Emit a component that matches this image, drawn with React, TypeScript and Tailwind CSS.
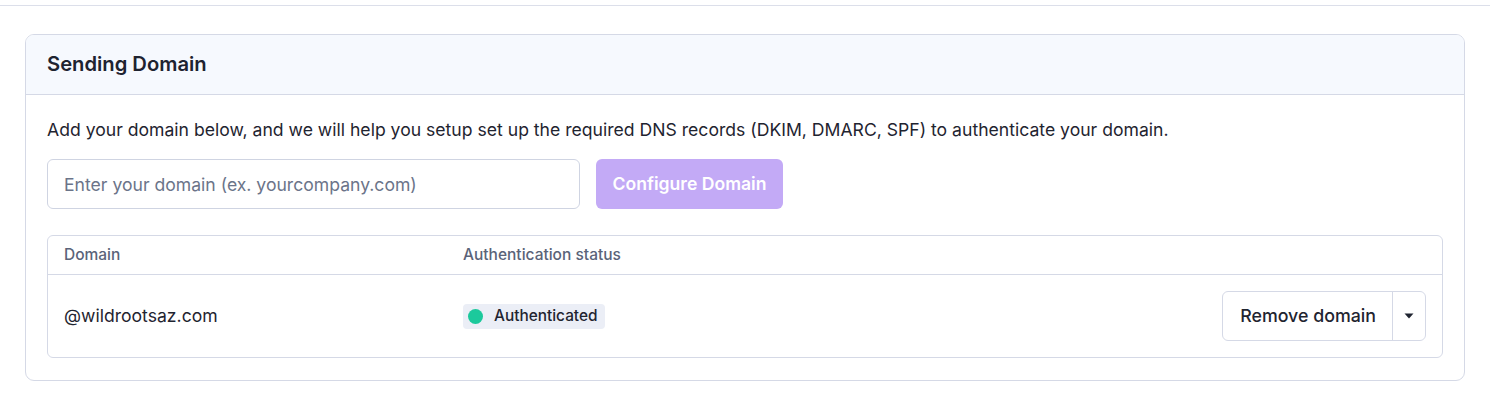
import { useState } from 'react'

export default function App() {
  const [domain, setDomain] = useState('')

  return (
    <div className="min-h-[406px] bg-white font-['Inter','Noto_Sans',sans-serif] text-[#1f2430]">
      {/* top divider */}
      <div className="h-[6px] border-b border-[#dcdfea]" />

      <div className="px-[25px] pt-[28px]">
        <section className="overflow-hidden rounded-[9px] border border-[#d5d9e6]">
          <header className="flex h-[60px] items-center border-b border-[#d5d9e6] bg-[#f6f9fe] px-[21px]">
            <h2 className="text-[20.2px] font-semibold text-[#1e2330]">Sending Domain</h2>
          </header>

          <div className="px-[21px] pt-[23px] pb-[22px]">
            <p className="text-[17.6px] leading-[24px] text-[#1f2430]">
              Add your domain below, and we will help you setup set up the required DNS records (DKIM, DMARC, SPF) to authenticate your domain.
            </p>

            {/* Domain form */}
            <div className="mt-[17px] flex gap-[16px]">
              <input
                value={domain}
                onChange={(e) => setDomain(e.target.value)}
                placeholder="Enter your domain (ex. yourcompany.com)"
                className="h-[50px] w-[533px] rounded-[6px] border border-[#cfd4e2] px-[16px] text-[17.6px] text-[#1f2430] outline-none placeholder:text-[#6b7489]"
              />
              <button
                disabled
                className="h-[50px] w-[187px] rounded-[6px] bg-[#c3aaf6] text-[17.6px] font-semibold text-white"
              >
                Configure Domain
              </button>
            </div>

            {/* Domains table */}
            <div className="mt-[26px] rounded-[6px] border border-[#d5d9e6]">
              <div className="flex h-[39px] items-center border-b border-[#d5d9e6] px-[16px] text-[15.5px] font-medium text-[#5a6379]">
                <span className="w-[399px]">Domain</span>
                <span>Authentication status</span>
              </div>
              <div className="flex h-[82px] items-center px-[16px]">
                <span className="w-[399px] text-[17.6px] text-[#1f2430]">@wildrootsaz.com</span>
                <span className="flex h-[25px] items-center gap-[11px] rounded-[4px] bg-[#ebeef6] pl-[5px] pr-[7px] text-[15.4px] font-medium text-[#1f2430]">
                  <span className="h-[15px] w-[15px] rounded-full bg-[#1cc99c]" />
                  Authenticated
                </span>

                <div className="ml-auto flex h-[50px] rounded-[6px] border border-[#d5d9e6]">
                  <button className="pl-[17px] pr-[16px] text-[17.8px] font-medium text-[#1f2430]">
                    Remove domain
                  </button>
                  <button className="flex w-[33px] items-center justify-center border-l border-[#d5d9e6]">
                    <svg width="10" height="6" viewBox="0 0 10 6" className="fill-[#1f2430]">
                      <path d="M0.5 0.5h9L5 5.5z" />
                    </svg>
                  </button>
                </div>
              </div>
            </div>
          </div>
        </section>
      </div>
    </div>
  )
}
